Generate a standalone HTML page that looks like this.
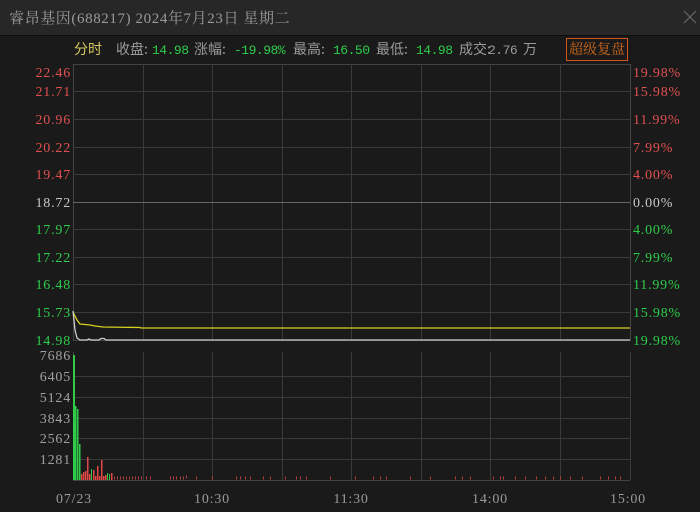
<!DOCTYPE html>
<html><head><meta charset="utf-8"><style>
html,body{margin:0;padding:0;background:#1a1a1a;width:700px;height:512px;overflow:hidden}
body{font-family:"Liberation Mono","Noto Sans CJK SC",monospace}
.title{position:absolute;left:0;top:0;width:700px;height:35px;background:#272727;border-bottom:1px solid #0e0e0e}
.title span{position:absolute;left:9px;top:7px;font-size:15px;letter-spacing:0.6px;color:#9a9a9a;font-family:"Liberation Serif","Noto Serif CJK SC",serif;white-space:nowrap}
.i{position:absolute;top:41px;font-size:14px;white-space:nowrap;color:#9a9a9a;font-family:"Noto Sans CJK SC",sans-serif;line-height:17px}
.n{position:absolute;top:42px;font-size:13px;white-space:nowrap;color:#2fcc4a;font-family:"Liberation Mono",monospace;line-height:17px;letter-spacing:-0.5px}
.btn{position:absolute;left:566px;top:38px;width:62px;height:23px;border:1px solid #d2581a;box-sizing:border-box;color:#d2681a;font-size:14px;text-align:center;line-height:21px;font-family:"Noto Serif CJK SC",serif}
svg{position:absolute;left:0;top:0}
svg text{font-family:"Liberation Serif","DejaVu Serif",serif;font-size:14px;letter-spacing:0.8px}
</style></head><body>
<div class="title"><span>睿昂基因(688217) 2024年7月23日 星期二</span></div>
<div class="i" style="left:74px;color:#d8c860">分时</div>
<div class="i" style="left:116px">收盘:</div><div class="n" style="left:152px">14.98</div>
<div class="i" style="left:194px">涨幅:</div><div class="n" style="left:234px">-19.98%</div>
<div class="i" style="left:293px">最高:</div><div class="n" style="left:333px">16.50</div>
<div class="i" style="left:376px">最低:</div><div class="n" style="left:416px">14.98</div>
<div class="i" style="left:459px">成交:</div><div class="n" style="left:488px;color:#9a9a9a">2.76</div><div class="i" style="left:523px">万</div>
<div class="btn">超级复盘</div>
<svg width="700" height="512">
<path d="M684 11L696 23M696 11L684 23" stroke="#666" stroke-width="1.2"/>
<g stroke="#3a3a3a" stroke-width="1">
<rect x="73.5" y="64.5" width="557" height="276" fill="none" stroke="#444"/>
<path d="M73 91.5H630M73 119.5H630M73 147.5H630M73 174.5H630M73 229.5H630M73 257.5H630M73 284.5H630M73 312.5H630"/>
<path d="M143.5 64V340M212.5 64V340M282.5 64V340M351.5 64V340M421.5 64V340M490.5 64V340M560.5 64V340"/>
<path d="M73 376.5H630M73 397.5H630M73 418.5H630M73 438.5H630M73 459.5H630"/>
<path d="M143.5 352V480M212.5 352V480M282.5 352V480M351.5 352V480M421.5 352V480M490.5 352V480M560.5 352V480M630.5 352V480"/>
<path d="M73.5 352V480M73 480.5H630" stroke="#444"/>
</g>
<path d="M73 202.5H630" stroke="#666"/>
<polyline points="73,312 77,320 80,324 90,325 95,326 103,327 140,327.5 141,328 630,328" fill="none" stroke="#d6d020" stroke-width="1.3"/>
<polyline points="73,311 75,330 77,338 80,340 87,340 89,339 91,340 99,340 101,338.5 104,338.5 106,340 630,340" fill="none" stroke="#cfcfcf" stroke-width="1.3"/>
<g fill="#2fcc4a">
<rect x="73" y="355" width="2" height="125"/><rect x="75" y="406" width="1.5" height="74"/><rect x="77" y="409" width="1.5" height="71"/><rect x="79" y="444" width="1.5" height="36"/><rect x="91" y="469" width="1" height="11"/><rect x="107" y="473" width="1" height="7"/><rect x="109" y="474" width="1" height="6"/>
</g>
<g fill="#e04848">
<rect x="81" y="474" width="1.5" height="6"/><rect x="83" y="472" width="1.5" height="8"/><rect x="85" y="471" width="1.5" height="9"/><rect x="87" y="457" width="1.5" height="23"/><rect x="89" y="474" width="1.5" height="6"/><rect x="93" y="470" width="1.5" height="10"/><rect x="95" y="476" width="1.5" height="4"/><rect x="97" y="466" width="1.5" height="14"/><rect x="99" y="476" width="1.5" height="4"/><rect x="101" y="460" width="1.5" height="20"/><rect x="103" y="476" width="1.5" height="4"/><rect x="105" y="475" width="1.5" height="5"/><rect x="111" y="473" width="1.5" height="7"/>
</g>
<path d="M114 478h1M117 478h1M120 478h1M123 478h1M126 478h1M129 478h1M132 478h1M135 478h1M138 478h1M141 478h1M146 478h1M150 478h1M170 478h1M173 478h1M176 478h1M180 478h1M183 478h1M186 477h1M196 478h1M212 478h1M236 478h1M240 478h1M245 478h1M250 478h1M263 478h1M270 478h1M285 478h1M296 478h1M300 478h1M306 478h1M330 478h1M355 478h1M373 478h1M380 478h1M386 478h1M410 478h1M430 478h1M455 478h1M462 478h1M470 478h1M493 478h1M500 478h1M503 478h1M515 478h1M525 478h1M536 478h1M545 478h1M553 478h1M560 478h1M570 478h1M582 478h1M600 478h1M608 478h1M615 478h1M620 478h1" stroke="#b04040" stroke-width="3" fill="none"/>
<g text-anchor="end">
<text x="71" y="77" fill="#e05050">22.46</text>
<text x="71" y="96" fill="#e05050">21.71</text>
<text x="71" y="124" fill="#e05050">20.96</text>
<text x="71" y="152" fill="#e05050">20.22</text>
<text x="71" y="179" fill="#e05050">19.47</text>
<text x="71" y="207" fill="#c8c8c8">18.72</text>
<text x="71" y="234" fill="#2fcc4a">17.97</text>
<text x="71" y="262" fill="#2fcc4a">17.22</text>
<text x="71" y="289" fill="#2fcc4a">16.48</text>
<text x="71" y="317" fill="#2fcc4a">15.73</text>
<text x="71" y="345" fill="#2fcc4a">14.98</text>
<g fill="#a0a0a0">
<text x="71" y="360">7686</text><text x="71" y="381">6405</text><text x="71" y="402">5124</text><text x="71" y="423">3843</text><text x="71" y="443">2562</text><text x="71" y="464">1281</text>
</g>
</g>
<g>
<text x="633" y="77" fill="#e05050">19.98%</text>
<text x="633" y="96" fill="#e05050">15.98%</text>
<text x="633" y="124" fill="#e05050">11.99%</text>
<text x="633" y="152" fill="#e05050">7.99%</text>
<text x="633" y="179" fill="#e05050">4.00%</text>
<text x="633" y="207" fill="#c8c8c8">0.00%</text>
<text x="633" y="234" fill="#2fcc4a">4.00%</text>
<text x="633" y="262" fill="#2fcc4a">7.99%</text>
<text x="633" y="289" fill="#2fcc4a">11.99%</text>
<text x="633" y="317" fill="#2fcc4a">15.98%</text>
<text x="633" y="345" fill="#2fcc4a">19.98%</text>
</g>
<g fill="#9a9a9a" text-anchor="middle" style="font-size:15px">
<text x="74" y="503">07/23</text><text x="212" y="503">10:30</text><text x="351" y="503">11:30</text><text x="490" y="503">14:00</text><text x="628" y="503">15:00</text>
</g>
</svg>
</body></html>
